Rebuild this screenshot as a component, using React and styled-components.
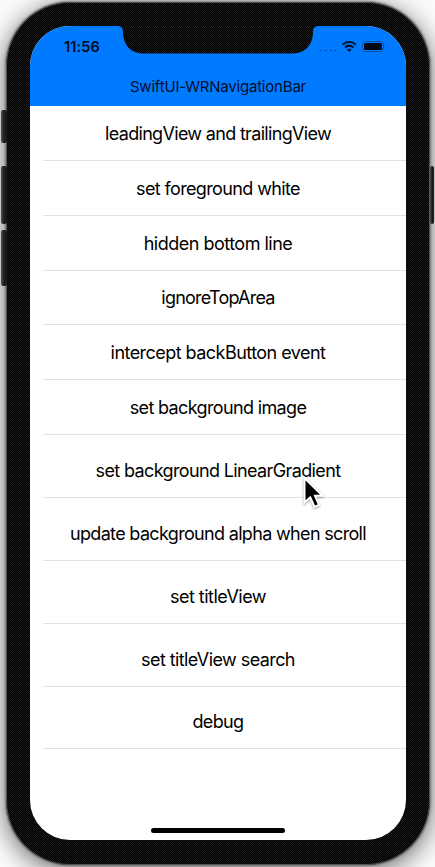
import React from "react";
import styled, { createGlobalStyle } from "styled-components";

const GlobalStyle = createGlobalStyle`
  html, body { margin: 0; padding: 0; overflow: hidden; }
  body { font-family: Inter, "Liberation Sans", sans-serif; color: #000; }
  * { box-sizing: border-box; }
`;

const Backdrop = styled.main`
  display: flex;
  width: 435px;
  height: 867px;
  padding: 2px 0;
  overflow: hidden;
  background: #fbfbfb;
`;

const Rail = styled.div`
  z-index: 1;
  display: flex;
  flex: none;
  flex-direction: column;
  width: 6px;
  padding-left: 1px;
  padding-top: ${(p) => p.$start}px;
`;

const RightRail = styled(Rail)`
  width: 5px;
  padding-left: 0;
`;

const SideButton = styled.span`
  flex: none;
  width: ${(p) => (p.$width || 6)}px;
  height: ${(p) => p.$height}px;
  margin-bottom: ${(p) => p.$gap || 0}px;
  border-radius: 2px;
  background: linear-gradient(90deg, #555, #1c1c1c 50%);
`;

const Device = styled.div`
  flex: none;
  width: 424px;
  height: 863px;
  padding: 24px;
  border-radius: 64px;
  background: repeating-conic-gradient(#000 0 25%, #191919 0 50%) 0 0 / 2px 2px;
  box-shadow: inset 0 0 0 1px #555, 0 0 2px 1px #777, 0 5px 24px 2px #777;
`;

const Screen = styled.div`
  position: relative;
  display: flex;
  flex-direction: column;
  width: 376px;
  height: 814px;
  overflow: hidden;
  border-radius: 40px;
  background: #fff;
`;

const Header = styled.header`
  height: 80px;
  flex: none;
  background: #007aff;
`;

const StatusBar = styled.div`
  display: flex;
  justify-content: space-between;
  height: 41px;
  padding: 12px 19px 0 34px;
`;

const Clock = styled.time`
  font-size: 14.5px;
  font-weight: 600;
  line-height: 18px;
  letter-spacing: 0.15px;
  color: #000a20;
`;

const Title = styled.h1`
  margin: 0;
  font-size: 15px;
  font-weight: 400;
  line-height: 40px;
  text-align: center;
  letter-spacing: -0.2px;
  color: #000d2b;
`;

const Notch = styled.svg`
  position: absolute;
  top: -1px;
  left: 88px;
  width: 200px;
  height: 29px;
`;

const List = styled.ul`
  display: flex;
  flex-direction: column;
  margin: 0;
  padding: 0 0 0 13px;
  list-style: none;
`;

const Row = styled.li`
  display: flex;
  align-items: center;
  justify-content: center;
  height: ${(p) => p.$height}px;
  padding: ${(p) => (p.$height > 60 ? 8 : 0)}px 13px 0 0;
  border-bottom: 1px solid #e2e2e4;
  font-size: 18px;
  letter-spacing: ${(p) => p.$spacing}px;
  white-space: nowrap;
`;

const HomeIndicator = styled.span`
  align-self: center;
  width: 134px;
  height: 5px;
  margin-top: auto;
  margin-bottom: 7px;
  border-radius: 3px;
  background: #000;
`;

const Pointer = styled.svg`
  position: absolute;
  top: 475px;
  left: 300px;
  z-index: 2;
  width: 26px;
  height: 36px;
  filter: drop-shadow(0 1px 1px rgba(0, 0, 0, 0.4));
`;

const rows = [
  ["leadingView and trailingView", 55, -0.68],
  ["set foreground white", 55, -0.63],
  ["hidden bottom line", 55, -0.5],
  ["ignoreTopArea", 54, -0.78],
  ["intercept backButton event", 55, -0.54],
  ["set background image", 55, -0.64],
  ["set background LinearGradient", 63, -0.63],
  ["update background alpha when scroll", 63, -0.67],
  ["set titleView", 63, -0.5],
  ["set titleView search", 63, -0.58],
  ["debug", 62, -0.65],
];

const StatusIcons = () => (
  <svg width="68" height="18" viewBox="0 0 68 18" aria-hidden="true">
    <path d="M1 12.5h2M6 12.5h2M11 12.5h2M15 12.5h2" stroke="#004fae" />
    <g fill="none" stroke="#00132f" strokeWidth="2">
      <path d="M23.5 6.7c4-3.6 9.5-3.6 13.5 0M26 9.5c2.6-2.3 5.9-2.3 8.5 0" />
      <path d="M28 11.7q2.25-1.8 4.5 0l-2.25 2.3z" fill="#00132f" stroke="none" />
    </g>
    <rect x="43.5" y="3.5" width="21" height="10" rx="3" fill="none" stroke="#0050b0" />
    <rect x="45" y="5" width="18" height="7" rx="1.5" fill="#000914" />
    <path d="M66 6.5q1.5 2 0 4z" fill="#0050b0" />
  </svg>
);

export default function App() {
  return (
    <Backdrop>
      <GlobalStyle />
      <Rail $start={108}>
        <SideButton $height={33} $gap={23} />
        <SideButton $height={58} $gap={6} />
        <SideButton $height={56} />
      </Rail>
      <Device>
        <Screen>
          <Header>
            <StatusBar>
              <Clock>11:56</Clock>
              <StatusIcons />
            </StatusBar>
            <Title>SwiftUI-WRNavigationBar</Title>
          </Header>
          <List>
            {rows.map(([label, height, spacing]) => (
              <Row key={label} $height={height} $spacing={spacing}>{label}</Row>
            ))}
          </List>
          <HomeIndicator />
          <Notch viewBox="0 0 200 29" aria-hidden="true">
            <defs>
              <pattern id="mesh" width="2" height="2" patternUnits="userSpaceOnUse">
                <path d="M0 0h2v2H0z" fill="#191919" />
                <path d="M1 0h1v1H1zM0 1h1v1H0z" fill="#000" />
              </pattern>
            </defs>
            <path d="M0 0V1Q5 1 5 7C5 20 13 28.500 26 28.500H174C187 28.500 195 20 195 7Q195 1 200 1V0Z" fill="url(#mesh)" />
          </Notch>
        </Screen>
      </Device>
      <RightRail $start={164}>
        <SideButton $width={4} $height={58} />
      </RightRail>
      <Pointer viewBox="0 0 26 36" aria-hidden="true">
        <path d="M4.5 3v24.5l5.8-5.200 4.200 9.500 4.500-2-4-9h7.500z" fill="#000" stroke="#fff" strokeWidth="2" />
      </Pointer>
    </Backdrop>
  );
}
